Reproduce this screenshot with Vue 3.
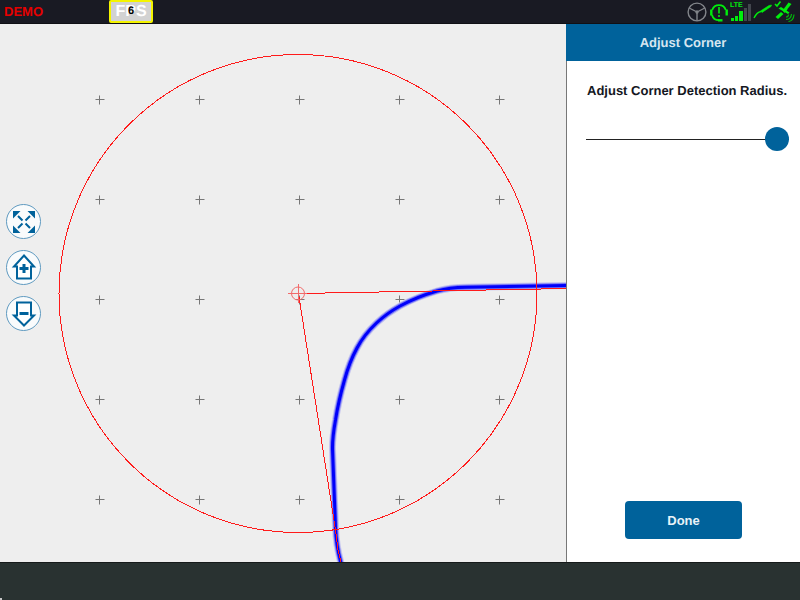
<script setup>
import { ref } from 'vue'

const radius = ref(100)
const rows = [99.5, 199.5, 299.5, 399.5, 499.5]
const columns = [99.5, 199.5, 299.5, 399.5, 499.5]
const grid = rows.flatMap((y) => columns.map((x) => `M${x - 4} ${y}h9M${x} ${y - 4}v9`)).join('')
const track =
  'M568 285.5L466 287.2C452 287.4 446 288.4 437 291C425 294.500 411 300 400 306C391 311 384 316 376.500 323C368 331 362 338.500 357 348C351 359 347.500 369 344.500 380C340.500 394 337.500 407 335.500 420C333 434 332.300 440 332.500 449L335.500 527C336 543 338 553 341.500 565'
</script>

<template>
  <div class="screen">
    <header class="topbar">
      <span class="demo">DEMO</span>
      <div class="fps"><span class="fps-label">FPS</span><span class="fps-value">6</span></div>
      <div class="status">
        <svg class="wheel" viewBox="0 0 20 20" width="20" height="20" aria-hidden="true">
          <g fill="none" stroke="#83868b" stroke-width="1.4">
            <circle cx="10" cy="10" r="8.9" />
            <circle cx="10" cy="10" r="1" fill="#83868b" />
            <path d="M9 9.500L2.200 6M11 9.500l6.800-3.500M10 11v8" />
          </g>
        </svg>
        <svg viewBox="0 0 20 20" width="20" height="20" aria-hidden="true">
          <g fill="none" stroke="#00ee0c">
            <path d="M3.200 8A7.200 7.200 0 0 1 16.800 8M3 13C4 16.500 6.500 18.200 10 18.200" stroke-width="1.8" />
            <path d="M2.300 7.500v6M17.700 7.500v6" stroke-width="2.400" />
            <path d="M10 5v6.500M10 13v2" stroke-width="1.600" />
            <path d="M9 18.300h4.500" stroke-width="2.400" />
          </g>
        </svg>
        <svg viewBox="0 0 22 22" width="22" height="22" aria-hidden="true">
          <text x="0" y="6" class="lte">LTE</text>
          <path fill="#00ee0c" d="M1 17h3v3H1zM5 15h3v5H5zM9 10h4v10H9z" />
          <path fill="#43464e" d="M14 7h3v13h-3zM18 3h3v17h-3z" />
        </svg>
        <svg viewBox="0 0 20 20" width="20" height="20" aria-hidden="true">
          <path d="M1 16C3 12 5 10 8 9.500" fill="none" stroke="#00ee0c" stroke-width="1.4" />
          <path d="M7.500 9L16 3.500L18.500 3L18 4.500L9 10.500z" fill="#00ee0c" stroke="#00ee0c" stroke-width="0.6" />
        </svg>
        <svg viewBox="0 0 22 22" width="22" height="22" aria-hidden="true">
          <path d="M1 3l2 2L6.500 0.500" fill="none" stroke="#00ee0c" stroke-width="1.6" />
          <g fill="#00ee0c">
            <path d="M1.500 16l5.500-5 2.500 2-5.500 5zM10.500 7l4-5.500 3 1.500-4.500 5.500z" />
            <path d="M4.500 7.500l2.500-1.500 8.500 5.500-1.500 1.500z" />
            <path d="M8.500 9.500l2.500-3 2.500 2-3 3.500z" />
          </g>
          <path
            d="M12 16q2.500 0 2.500-2.500M12 18.500q5 0 5.500-5.500M14.500 20.500q5-0.500 5.500-7"
            fill="none"
            stroke="#00b80a"
            stroke-width="1.2"
          />
        </svg>
      </div>
    </header>

    <main class="content">
      <section class="map" aria-label="Map">
        <svg class="canvas" viewBox="0 24 566 538" preserveAspectRatio="xMinYMin slice">
          <path :d="grid" class="grid" />
          <g class="track">
            <path :d="track" stroke="#c4c4ef" stroke-width="7" />
            <path :d="track" stroke="#7474f6" stroke-width="5" />
            <path :d="track" stroke="#0000fa" stroke-width="3" />
          </g>
          <g class="corner">
            <circle cx="298" cy="293.500" r="239" />
            <path d="M298.500 293.500L568 288.500M298.500 293.500L335.500 530L338 550L341 562" />
          </g>
          <g class="target">
            <circle cx="298" cy="293.500" r="6.500" />
            <path d="M288 293.500h19M298.500 284v19" />
          </g>
        </svg>
        <nav class="tools">
          <button class="tool" type="button" aria-label="Fit to view">
            <svg viewBox="0 0 34 34" width="34" height="34">
              <path class="solid" d="M6 6h7.500L6 13.500zM28 6h-7.500l7.500 7.500zM6 28h7.500L6 20.500zM28 28h-7.500l7.500-7.500z" />
              <path class="dash" d="M11 11l4.500 4.500M23 11l-4.500 4.500M11 23l4.500-4.500M23 23l-4.500-4.500" />
            </svg>
          </button>
          <button class="tool" type="button" aria-label="Zoom in">
            <svg viewBox="0 0 34 34" width="34" height="34">
              <path class="outline" d="M17 4.500L27 15.500H24V27.500H10V15.500H7z" />
              <path class="sign" d="M12.500 17.500h9M17 13v9" />
            </svg>
          </button>
          <button class="tool" type="button" aria-label="Zoom out">
            <svg viewBox="0 0 34 34" width="34" height="34">
              <path class="outline" d="M10 5.500H24V18.500H27L17 28.500L7 18.500H10z" />
              <path class="sign" d="M12.500 16.500h9" />
            </svg>
          </button>
        </nav>
      </section>

      <aside class="panel">
        <h1 class="title">Adjust Corner</h1>
        <div class="body">
          <label class="label" for="radius">Adjust Corner Detection Radius.</label>
          <input id="radius" v-model="radius" class="slider" type="range" min="0" max="100" />
          <button class="done" type="button">Done</button>
        </div>
      </aside>
    </main>

    <footer class="bottombar"><span class="marker"></span></footer>
  </div>
</template>

<style>
body {
  margin: 0;
}
</style>

<style scoped>
.screen {
  display: flex;
  flex-direction: column;
  height: 100vh;
  font-family: "Liberation Sans", Arial, sans-serif;
  font-weight: 700;
  text-rendering: geometricPrecision;
  color: #15181f;
}
.topbar {
  display: flex;
  align-items: center;
  box-sizing: border-box;
  height: 24px;
  flex: none;
  padding: 0 4px;
  background: #191a23;
  border-bottom: 1px solid #101015;
}
.demo {
  width: 105px;
  font-size: 13px;
  line-height: 24px;
  color: #e60000;
}
.fps {
  display: grid;
  place-items: center;
  box-sizing: border-box;
  width: 44px;
  height: 23px;
  background: #d2d2d2;
  border: 2px solid #f4f400;
  border-radius: 2px;
}
.fps-label,
.fps-value {
  grid-area: 1 / 1;
}
.fps-label {
  font-size: 16px;
  line-height: 19px;
  color: #fff;
}
.fps-value {
  font-size: 11px;
  line-height: 19px;
  color: #000;
}
.status {
  display: flex;
  align-items: center;
  gap: 1px;
  margin-left: auto;
}
.wheel {
  margin-right: 1px;
}
.lte {
  font-size: 7px;
  fill: #00ee0c;
}
.content {
  display: grid;
  grid-template-columns: minmax(0, 566fr) minmax(0, 234fr);
  flex: 1;
  min-height: 0;
}
.map {
  position: relative;
  display: flex;
  align-items: center;
  min-height: 0;
  overflow: hidden;
  background: #eee;
}
.canvas {
  position: absolute;
  inset: 0;
  width: 100%;
  height: 100%;
}
.grid {
  fill: none;
  stroke: #777;
}
.track {
  fill: none;
  stroke-linejoin: round;
}
.corner {
  fill: none;
  stroke: #ff1a1a;
  shape-rendering: crispEdges;
}
.target {
  fill: none;
  stroke: #f26b6b;
}
.tools {
  position: relative;
  display: grid;
  gap: 11px;
  padding: 0 6px 52px;
}
.tool {
  display: grid;
  place-items: center;
  box-sizing: border-box;
  width: 35px;
  height: 35px;
  padding: 0;
  background: #f9fbfc;
  border: 1px solid #5f9ac0;
  border-radius: 50%;
}
.solid {
  fill: #00629b;
}
.dash {
  stroke: #00629b;
  stroke-width: 2;
}
.outline {
  fill: #fff;
  stroke: #00629b;
  stroke-width: 2;
}
.sign {
  stroke: #00629b;
  stroke-width: 3;
}
.panel {
  display: flex;
  flex-direction: column;
  background: #fff;
}
.title {
  margin: 0;
  font-size: 13px;
  line-height: 37px;
  text-align: center;
  color: #d5e5f0;
  background: #00629b;
}
.body {
  display: flex;
  flex-direction: column;
  flex: 1;
  padding: 20px 11px 23px 19px;
  border-left: 1px solid #777;
}
.label {
  padding-left: 1px;
  font-size: 13px;
  line-height: 20px;
}
.slider {
  appearance: none;
  width: 100%;
  height: 24px;
  margin: 26px 0 0;
  background: linear-gradient(#222, #222) center / 100% 1px no-repeat;
}
.slider::-webkit-slider-thumb {
  appearance: none;
  width: 24px;
  height: 24px;
  background: #00629b;
  border-radius: 50%;
}
.done {
  align-self: center;
  width: 117px;
  height: 38px;
  margin: auto 8px 0 0;
  font: inherit;
  font-size: 13px;
  color: #eaf3f8;
  background: #00629b;
  border: 0;
  border-radius: 4px;
}
.bottombar {
  display: flex;
  align-items: flex-end;
  box-sizing: border-box;
  height: 38px;
  flex: none;
  background: #293231;
  border-top: 1px solid #161a1a;
}
.marker {
  width: 2px;
  height: 2px;
  background: #c8c8c8;
}
</style>
